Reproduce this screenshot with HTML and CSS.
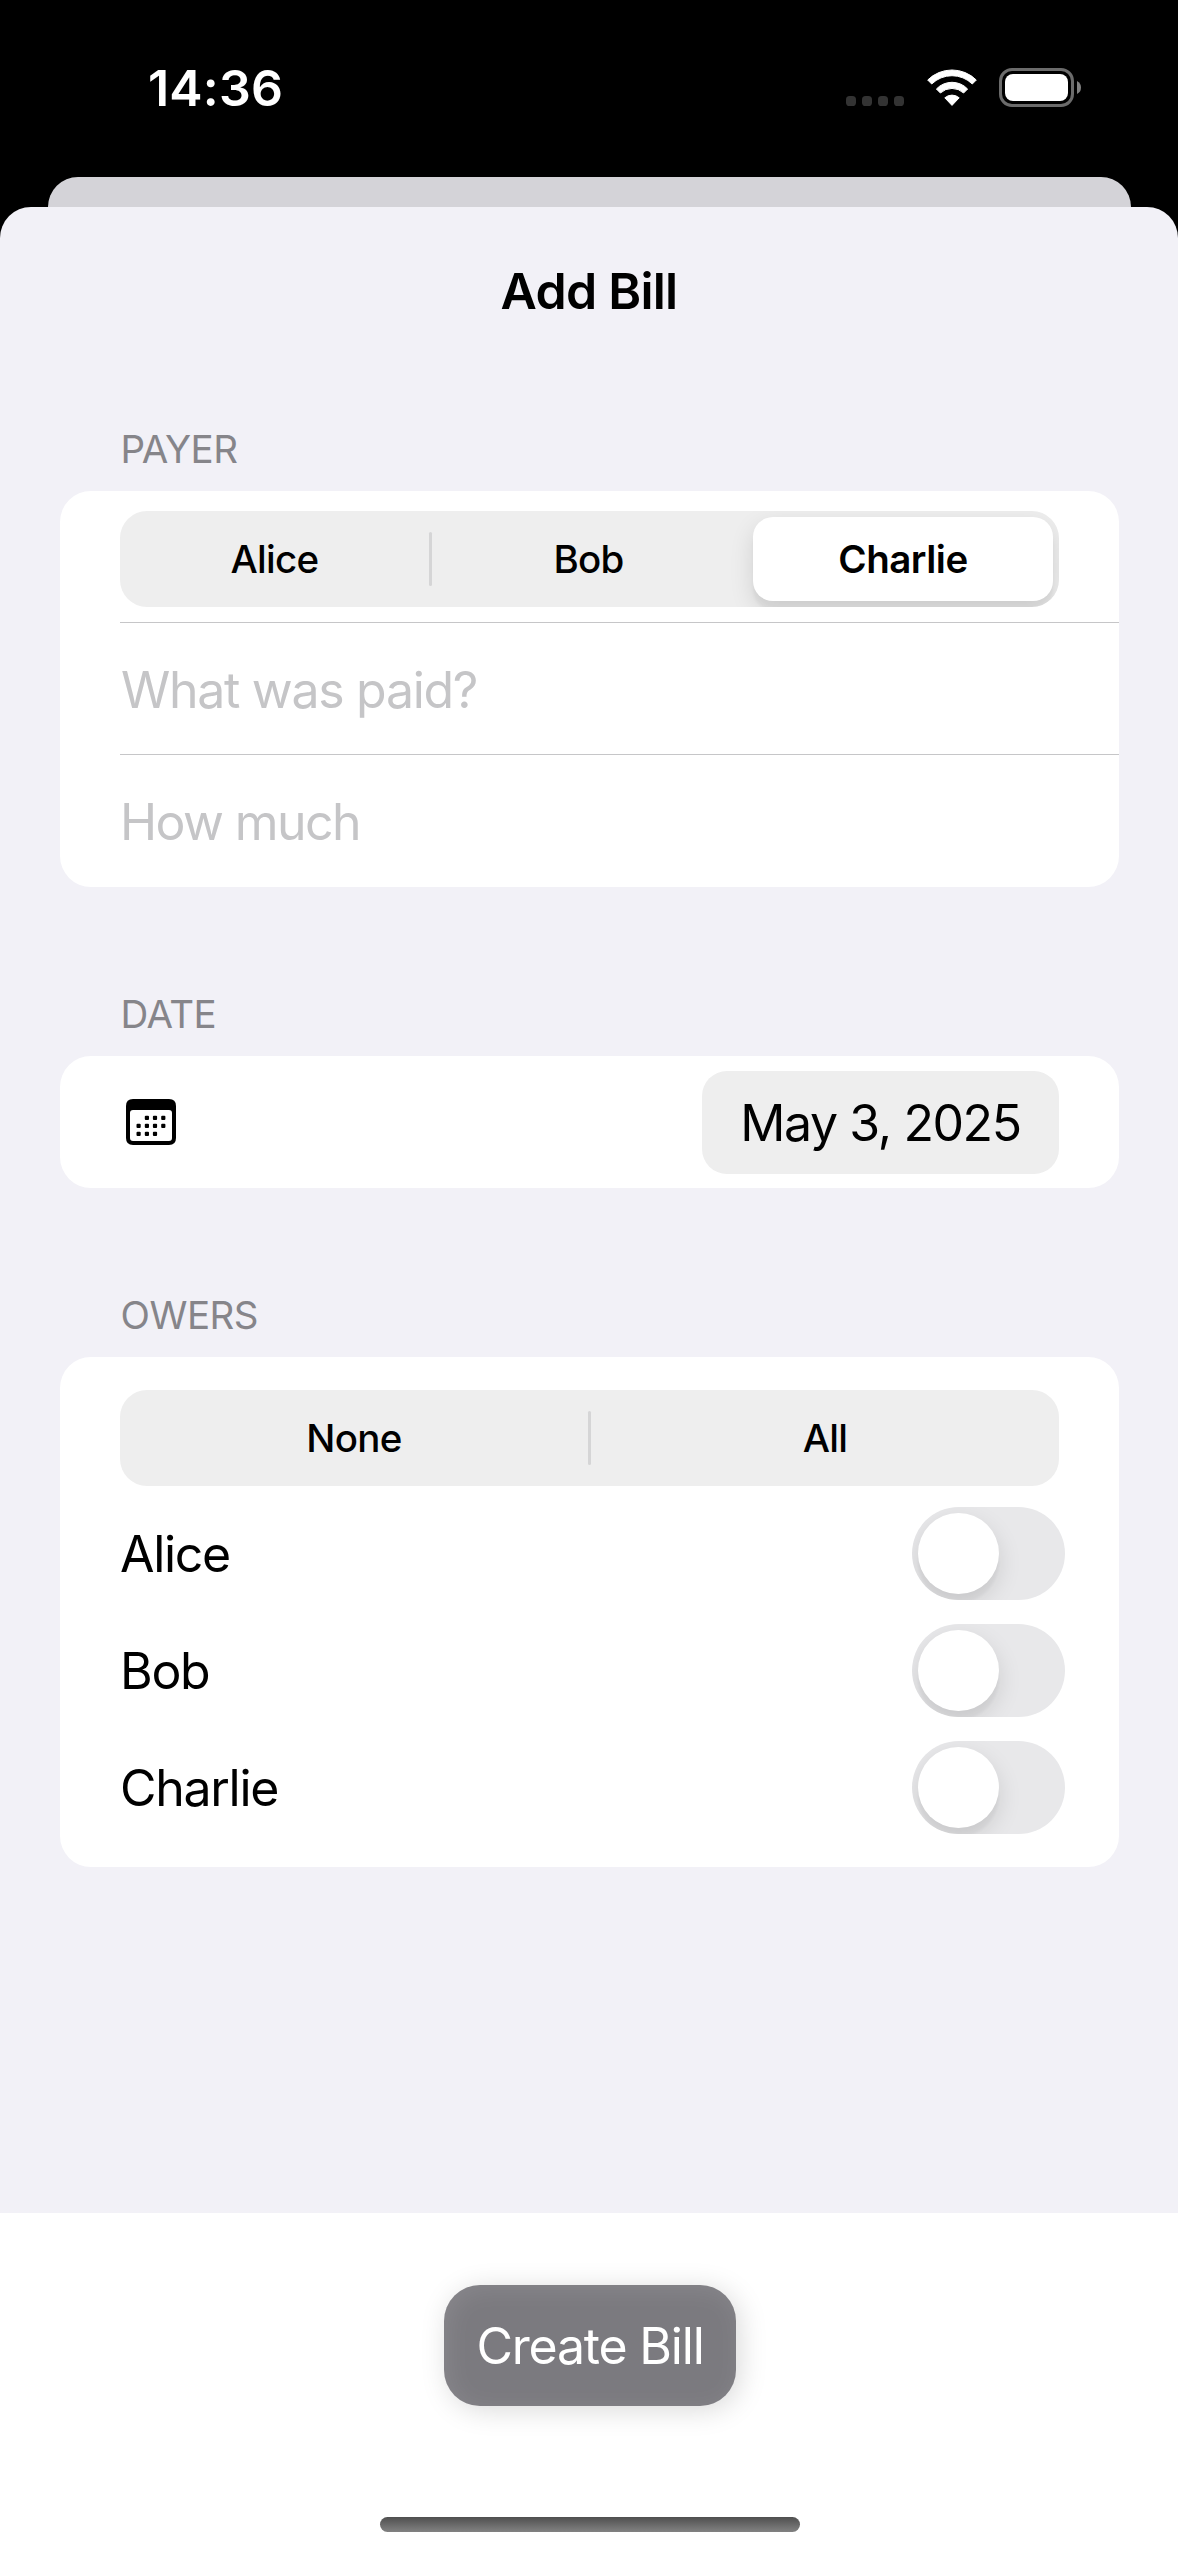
FILE: index.html
```html
<!DOCTYPE html>
<html lang="en">
<head>
<meta charset="utf-8">
<title>Add Bill</title>
<link rel="stylesheet" href="styles.css">
</head>
<body>
<div class="screen">
  <header class="status">
    <span class="time">14:36</span>
    <div class="indicators">
      <svg class="signal" width="58" height="10" viewBox="0 0 58 10"><g fill="#333"><rect width="10" height="10" rx="3.6"/><rect x="16" width="10" height="10" rx="3.6"/><rect x="32" width="10" height="10" rx="3.6"/><rect x="48" width="10" height="10" rx="3.6"/></g></svg>
      <svg class="wifi" width="50" height="38" viewBox="0 0 50 38"><g fill="#fff" stroke="#fff" stroke-width="1" stroke-linejoin="round"><path d="M.7 11A34.5 34.5 0 0 1 49.3 11L45.3 15A29 29 0 0 0 4.7 15Z"/><path d="M9.4 20A21.5 21.5 0 0 1 40.6 20L36.6 24A17 17 0 0 0 13.4 24Z"/><path d="M17.8 28.8A11 11 0 0 1 32.2 28.8L25 36.4Z"/></g></svg>
      <svg class="battery" width="82" height="39" viewBox="0 0 82 39"><rect x="1.5" y="1.5" width="72" height="36" rx="11.5" fill="none" stroke="#6b6b6b" stroke-width="3"/><rect x="6" y="6" width="63" height="27" rx="8" fill="#fff"/><path d="M78 13Q82 15 82 19.5T78 26Z" fill="#808080"/></svg>
    </div>
  </header>
  <div class="back-sheet"></div>
  <main class="sheet">
    <h1 class="title">Add Bill</h1>

    <section class="group">
      <h2 class="label">PAYER</h2>
      <div class="card">
        <div class="row segment-row">
          <div class="segmented">
            <span class="segment">Alice</span><i class="divider"></i><span class="segment middle">Bob</span><span class="segment selected">Charlie</span>
          </div>
        </div>
        <div class="row field what">What was paid?</div>
        <div class="row field how">How much</div>
      </div>
    </section>

    <section class="group">
      <h2 class="label">DATE</h2>
      <div class="card">
        <div class="row date-row">
          <svg class="calendar" width="50" height="46" viewBox="0 0 50 46"><path fill-rule="evenodd" d="M7 0H43Q50 0 50 7V39Q50 46 43 46H7Q0 46 0 39V7Q0 0 7 0ZM7 11Q4 11 4 14V39Q4 42 7 42H43Q46 42 46 39V14Q46 11 43 11Z"/><g><rect x="18.8" y="16.7" width="4.2" height="4.2" rx="1"/><rect x="26.9" y="16.7" width="4.2" height="4.2" rx="1"/><rect x="35.2" y="16.7" width="4.2" height="4.2" rx="1"/><rect x="10.5" y="24.7" width="4.2" height="4.2" rx="1"/><rect x="18.8" y="24.7" width="4.2" height="4.2" rx="1"/><rect x="26.9" y="24.7" width="4.2" height="4.2" rx="1"/><rect x="35.2" y="24.7" width="4.2" height="4.2" rx="1"/><rect x="10.5" y="32.7" width="4.2" height="4.2" rx="1"/><rect x="18.8" y="32.7" width="4.2" height="4.2" rx="1"/><rect x="26.9" y="32.7" width="4.2" height="4.2" rx="1"/></g></svg>
          <span class="date-pill">May 3, 2025</span>
        </div>
      </div>
    </section>

    <section class="group">
      <h2 class="label">OWERS</h2>
      <div class="card owers-card">
        <div class="segmented">
          <span class="segment">None</span><i class="divider"></i><span class="segment">All</span>
        </div>
        <div class="owner"><span>Alice</span><span class="toggle"><i class="knob"></i></span></div>
        <div class="owner"><span>Bob</span><span class="toggle"><i class="knob"></i></span></div>
        <div class="owner"><span>Charlie</span><span class="toggle"><i class="knob"></i></span></div>
      </div>
    </section>
  </main>
  <footer class="footer">
    <button class="create">Create Bill</button>
    <div class="home"></div>
  </footer>
</div>
</body>
</html>
```
FILE: styles.css
```css
* { box-sizing: border-box; }
body { margin: 0; background: #000; font-family: Inter, "Liberation Sans", sans-serif; color: #000; }
.screen { width: 1178px; height: 2556px; display: flex; flex-direction: column; overflow: hidden; }

.status { height: 177px; flex: none; display: flex; justify-content: space-between; align-items: flex-start; padding: 58px 97px 0 148px; color: #fff; }
.time { font-size: 50px; font-weight: 600; line-height: 60px; letter-spacing: 0.2px; }
.indicators { display: flex; align-items: flex-end; padding-top: 10px; }
.signal { margin-bottom: 1px; }
.wifi { margin-left: 22.5px; }
.battery { margin-left: 22.5px; }

.back-sheet { height: 30px; flex: none; margin: 0 47px 0 48px; background: #d4d3d8; border-radius: 30px 30px 0 0; }
.sheet { flex: 1; background: #f2f1f7; border-radius: 31px 31px 0 0; }
.title { margin: 0 0 50px; font-size: 50px; font-weight: 600; line-height: 168px; text-align: center; letter-spacing: -0.75px; }

.group { padding: 0 59px 0 60px; margin-bottom: 103px; }
.label { margin: 0 0 18px 60.5px; font-size: 38.5px; font-weight: 400; line-height: 48px; letter-spacing: -0.5px; color: #86858a; }
.card { background: #fff; border-radius: 31px; overflow: hidden; }
.row { height: 132px; display: flex; align-items: center; }
.segment-row { padding: 20px 60px 0; height: 131px; align-items: flex-start; }
.segmented { width: 939px; height: 96px; display: flex; align-items: center; background: #eee; border-radius: 27px; overflow: hidden; font-size: 38.5px; font-weight: 500; letter-spacing: -0.7px; line-height: 48px; }
.segment { flex: 1; text-align: center; }
.divider { width: 3px; height: 54px; border-radius: 2px; background: #d5d5d6; }
.middle { flex: none; width: 313px; }
.selected { flex: none; width: 300px; height: 84px; margin: 0 6px 0 8px; line-height: 84px; letter-spacing: -0.5px; border-radius: 20px; background: #fff; font-weight: 600; box-shadow: 0 9px 24px rgba(0,0,0,.12), 0 9px 3px rgba(0,0,0,.04); }

.field { margin-left: 60px; padding: 2px 0 0 1px; font-size: 50px; color: #c5c5c7; border-top: 1px solid #c6c6c8; }
.what { letter-spacing: -1.3px; }
.how { height: 133px; padding-left: 0; letter-spacing: -1.6px; }

.date-row { padding: 0 60px 0 66px; justify-content: space-between; }
.date-pill { width: 357px; height: 103px; line-height: 104px; text-align: center; letter-spacing: -1.4px; border-radius: 25px; background: #eee; font-size: 50px; }

.owers-card { padding: 33px 60px 21px; }
.owers-card .segmented { margin-bottom: 9px; }
.owner { height: 117px; display: flex; align-items: center; justify-content: space-between; margin: 0 -6px 0 0; font-size: 50px; line-height: 60px; letter-spacing: -1.3px; }
.toggle { width: 153px; height: 93px; padding: 6px; border-radius: 47px; background: #e8e8ea; overflow: hidden; }
.knob { display: block; width: 81px; height: 81px; border-radius: 50%; background: #fff; box-shadow: 0 9px 24px rgba(0,0,0,.12), 0 9px 3px rgba(0,0,0,.03); }

.footer { height: 343px; flex: none; display: flex; flex-direction: column; align-items: center; background: #fff; padding: 72px 0 0 2px; }
.create { width: 292px; height: 121px; padding: 0; border: 0; border-radius: 36px; background: #7b7a7f; color: #fff; font-family: inherit; font-size: 50px; letter-spacing: -1.2px; box-shadow: 4px 4px 28px rgba(0,0,0,.15), inset 4px 4px 24px rgba(255,255,255,.1); }
.home { width: 420px; height: 15px; margin-top: 111px; border-radius: 8px; background: linear-gradient(#4f4f4f, #828282); }
```
